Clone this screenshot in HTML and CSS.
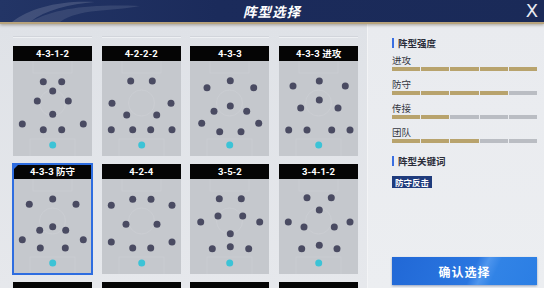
FILE: index.html
```html
<!DOCTYPE html>
<html lang="zh">
<head>
  <meta charset="UTF-8">
  <meta name="viewport" content="width=device-width, initial-scale=1.0">
  <title>阵型选择</title>
  <link rel="stylesheet" href="styles.css">
</head>
<body>
  <div class="app">
    <header class="topbar">
      <svg class="swoosh" width="160" height="22" viewBox="0 0 160 22">
        <path d="M12 22 C30 8 60 0 95 2 C70 4 45 10 30 22 Z" fill="rgba(255,255,255,0.14)"/>
        <path d="M30 22 C55 8 90 4 140 6 C110 12 80 8 60 22 Z" fill="rgba(255,255,255,0.10)"/>
      </svg>
      <h1 class="title">阵型选择</h1>
      <span class="close">X</span>
    </header>

    <main class="content">
      <section class="list">
        <div class="grid" id="grid">
          <div class="ghost"></div>
          <div class="ghost"></div>
          <div class="ghost"></div>
          <div class="ghost"></div>
        </div>
      </section>

      <aside class="panel">
        <h2 class="sec-title">阵型强度</h2>
        <div class="stats">
          <div class="stat">
            <div class="stat-label">进攻</div>
            <div class="bar" data-v="5"></div>
          </div>
          <div class="stat">
            <div class="stat-label">防守</div>
            <div class="bar" data-v="4"></div>
          </div>
          <div class="stat">
            <div class="stat-label">传接</div>
            <div class="bar" data-v="2"></div>
          </div>
          <div class="stat">
            <div class="stat-label">团队</div>
            <div class="bar" data-v="3"></div>
          </div>
        </div>

        <h2 class="sec-title key-title">阵型关键词</h2>
        <div class="tags"><span class="tag">防守反击</span></div>

        <button class="confirm">确认选择</button>
      </aside>
    </main>
  </div>

  <script>
    // 阵型数据 (坐标相对于球场 79x95)
    var formations = [
      { name: '4-3-1-2', dots: [[30.3,20.7],[48.7,20.7],[39.7,30],[24.3,40],[55.3,40],[39.7,53.3],[9.3,63],[70.3,63],[30.3,68.7],[48.7,68.7]] },
      { name: '4-2-2-2', dots: [[28.7,20],[50.3,20],[10,42.3],[69,42.3],[24.7,54],[54.7,54],[9.3,68.7],[30.7,68.7],[48.7,68.7],[70,68.7]] },
      { name: '4-3-3', dots: [[40.3,19.7],[17,26.7],[63.7,26.7],[40.3,45],[24,50.3],[56.7,50.3],[11.7,62.3],[68.7,62.3],[29.7,70.7],[51,70.7]] },
      { name: '4-3-3 进攻', dots: [[40.3,20],[14,25],[66.3,25],[40.3,39],[21.7,47],[59,47],[9.7,69],[28,69],[52.7,69],[71,69]] },
      { name: '4-3-3 防守', active: true, dots: [[39.7,20],[16.3,25.3],[63,25.3],[39.7,47.7],[26.7,51.3],[52.7,51.3],[9.3,60.7],[70.3,60.7],[27.3,69],[52.3,69]] },
      { name: '4-2-4', dots: [[30.7,20.3],[49,20.3],[9.3,26.3],[70,26.3],[24,45.3],[55,45.3],[9.3,63],[30.7,69],[48.7,69],[70,63]] },
      { name: '3-5-2', dots: [[29.3,19.7],[51.3,19.7],[10.7,43],[28,37],[52.7,37],[69.7,43],[40.3,54.7],[22.3,69.7],[40.3,67.7],[58.7,69.7]] },
      { name: '3-4-1-2', dots: [[28,18.7],[52.3,18.7],[40.3,31],[9.3,43],[25,48],[55.3,48],[71,43],[22.7,69.7],[40.3,66.3],[58,69.7]] },
      // 下一行只露出标题栏的顶部
      { name: '', dots: [] },
      { name: '', dots: [] },
      { name: '', dots: [] },
      { name: '', dots: [] }
    ]

    var grid = document.getElementById('grid')

    // 球场线
    var fieldLines =
      '<rect x="20" y="-1" width="39" height="13" fill="none" stroke="#cbced3" stroke-width="0.8"/>' +
      '<circle cx="39.5" cy="42" r="13" fill="none" stroke="#cbced3" stroke-width="0.8"/>' +
      '<rect x="17" y="78" width="45" height="18" fill="none" stroke="#cbced3" stroke-width="0.8"/>'

    for (var i = 0; i < formations.length; i++) {
      var f = formations[i]
      var card = document.createElement('div')
      card.className = f.active ? 'card active' : 'card'

      var head = document.createElement('div')
      head.className = 'card-head'
      head.textContent = f.name
      card.appendChild(head)

      var svg = '<svg class="pitch" viewBox="0 0 79 95" width="79" height="95">' + fieldLines
      for (var j = 0; j < f.dots.length; j++) {
        svg += '<circle cx="' + f.dots[j][0] + '" cy="' + f.dots[j][1] + '" r="3.5" fill="#4a4b62"/>'
      }
      if (f.dots.length) {
        svg += '<circle cx="39.7" cy="84" r="3.5" fill="#3cc3d6"/>'
      }
      svg += '</svg>'
      card.insertAdjacentHTML('beforeend', svg)

      grid.appendChild(card)
    }

    // 属性条
    var bars = document.querySelectorAll('.bar')
    for (var k = 0; k < bars.length; k++) {
      var v = +bars[k].getAttribute('data-v')
      for (var s = 0; s < 5; s++) {
        var seg = document.createElement('span')
        seg.className = s < v ? 'seg on' : 'seg'
        bars[k].appendChild(seg)
      }
    }
  </script>
</body>
</html>
```

FILE: styles.css
```css
* {
  margin: 0;
  padding: 0;
  box-sizing: border-box;
}

body {
  width: 544px;
  height: 288px;
  overflow: hidden;
  font-family: "Noto Sans CJK SC", "Noto Sans", sans-serif;
  background: #e4e7ec;
}

.app {
  display: flex;
  flex-direction: column;
  height: 288px;
}

/* 顶部标题栏 */
.topbar {
  position: relative;
  height: 24px;
  flex: none;
  display: flex;
  align-items: center;
  justify-content: center;
  background: linear-gradient(90deg, #233566 0%, #1b2b5b 40%, #1a2a58 100%);
  border-bottom: 2px solid #b7a37c;
  box-shadow: 0 1px 3px rgba(60, 50, 30, 0.4);
  z-index: 2;
}

.swoosh {
  position: absolute;
  left: 0;
  top: 0;
}

.title {
  color: #fff;
  font-size: 13.5px;
  font-weight: 700;
  font-style: italic;
  letter-spacing: 1px;
  line-height: 22px;
  margin-top: -1px;
}

.close {
  position: absolute;
  right: 6px;
  top: 0;
  color: #e8ebf2;
  font-family: "DejaVu Sans", sans-serif;
  font-size: 18px;
  line-height: 21px;
}

.content {
  flex: 1;
  display: flex;
  min-height: 0;
}

/* 左侧阵型列表 */
.list {
  width: 367px;
  flex: none;
  overflow: hidden;
  padding: 12px 0 0 13px;
  background: linear-gradient(180deg, #dfe2e7 0%, #e6e8ec 100%);
}

.grid {
  display: grid;
  grid-template-columns: repeat(4, 79px);
  column-gap: 9.7px;
  row-gap: 8px;
}

.ghost {
  height: 2px;
  border-top: 1px solid #d2d5db;
  border-bottom: 1px solid #eef0f3;
}

.card {
  position: relative;
  width: 79px;
  height: 110px;
  background: #c5c8cd;
}

.card-head {
  height: 15px;
  background: #050505;
  color: #fff;
  font-family: Roboto, "Noto Sans CJK SC", sans-serif;
  font-size: 9.5px;
  font-weight: 700;
  line-height: 15px;
  text-align: center;
}

.pitch {
  display: block;
}

.card.active {
  outline: 2px solid #2e6de0;
  outline-offset: -1px;
}

.card.active::before {
  content: '';
  position: absolute;
  left: 0;
  top: 0;
  border-top: 6px solid #2e6de0;
  border-right: 6px solid transparent;
}

/* 右侧信息面板 */
.panel {
  flex: 1;
  display: flex;
  flex-direction: column;
  padding: 13px 7px 3px 25px;
  background: linear-gradient(180deg, #e9ebef 0%, #eceef1 100%);
  box-shadow: inset 1px 0 0 #f3f4f6;
}

.sec-title {
  display: flex;
  align-items: center;
  gap: 4px;
  font-size: 9.5px;
  font-weight: 700;
  color: #2b2e3a;
  line-height: 12px;
}

.sec-title::before {
  content: '';
  width: 2px;
  height: 10px;
  background: #3a6fe2;
}

.stats {
  margin-top: 5px;
  display: flex;
  flex-direction: column;
  gap: 7px;
}

.stat-label {
  font-size: 9.5px;
  color: #34363f;
  line-height: 12px;
}

.bar {
  display: flex;
  gap: 1px;
  margin-top: 1px;
  height: 4px;
}

.seg {
  flex: 1;
  background: #babdc3;
}

.seg.on {
  background: #b8a36d;
}

.key-title {
  margin-top: 12px;
}

.tags {
  margin-top: 9px;
  display: flex;
}

.tag {
  padding: 0 3px;
  height: 12px;
  line-height: 12px;
  font-size: 8.5px;
  font-weight: 700;
  color: #fff;
  background: #1f3b7c;
}

.confirm {
  margin-top: auto;
  height: 28px;
  border: none;
  color: #fff;
  font-family: "Noto Sans CJK SC", sans-serif;
  font-size: 12px;
  font-weight: 700;
  letter-spacing: 1px;
  background: linear-gradient(115deg, #2168d6 0%, #2a76e0 55%, #4f96ee 62%, #3183e6 70%, #2b7ee4 100%);
  box-shadow: 0 1px 2px rgba(20, 50, 110, 0.4);
}
```
